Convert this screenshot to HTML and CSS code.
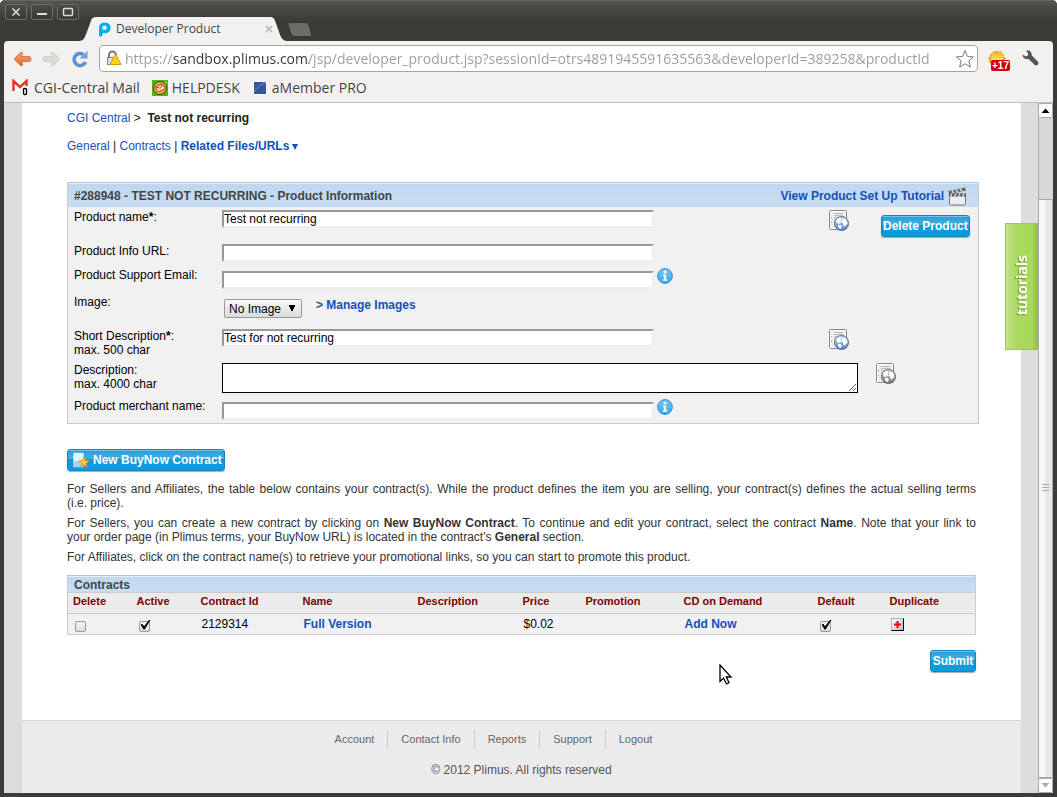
FILE: index.html
```html
<!DOCTYPE html>
<html lang="en">

<head>
    <meta charset="UTF-8">
    <meta name="viewport" content="width=device-width, initial-scale=1.0">
    <title>Developer Product</title>
    <link rel="stylesheet" href="styles.css">
</head>

<body>
    <!-- shared icons -->
    <svg class="sprite" aria-hidden="true">
        <defs>
            <linearGradient id="globe-blue" x1="0" y1="0" x2="0" y2="1">
                <stop offset="0" stop-color="#c3d8ef" />
                <stop offset="1" stop-color="#5583bf" />
            </linearGradient>
            <linearGradient id="globe-gray" x1="0" y1="0" x2="0" y2="1">
                <stop offset="0" stop-color="#d2d2d2" />
                <stop offset="1" stop-color="#777" />
            </linearGradient>
            <linearGradient id="info-fill" x1="0" y1="0" x2="0" y2="1">
                <stop offset="0" stop-color="#7cc4f0" />
                <stop offset="1" stop-color="#29abf0" />
            </linearGradient>
            <linearGradient id="back-fill" x1="0" y1="0" x2="0" y2="1">
                <stop offset="0" stop-color="#f4a878" />
                <stop offset="1" stop-color="#e2662a" />
            </linearGradient>
            <linearGradient id="sun-fill" x1="0" y1="0" x2="0" y2="1">
                <stop offset="0" stop-color="#ffc02e" />
                <stop offset="1" stop-color="#fff08a" />
            </linearGradient>
        </defs>
        <symbol id="icon-page" viewBox="0 0 20 22">
            <rect x="0.5" y="0.5" width="17" height="19" rx="1" fill="#fff" stroke="#888" />
            <rect x="2" y="2" width="14" height="16" fill="#ececec" />
            <path d="M5 3.500h9M5 5.500h9M5 7.500h8M5 9.500h3" stroke="#bbb" />
            <path d="M2 7.500h1M2 12.500h1" stroke="#999" />
        </symbol>
        <symbol id="icon-land" viewBox="0 0 20 22">
            <path d="M6.500 11.500L8 9l3-1.500 1.500 1.500-1 2 1 1.500-2 1-1.500 0.500-1-1.500zM13.500 9l2.500-0.500 2 2.500 0.500 3-1.500 0.500-1 2-1.500-0.500-0.500-2.500-1.500-1zM9 15l2.500 0 1.500 1.500-1.500 2.500-2-1z" fill="#fff" />
        </symbol>
        <symbol id="icon-info" viewBox="0 0 16 16">
            <circle cx="8" cy="8" r="7.400" fill="url(#info-fill)" stroke="#3f8fd0" />
            <circle cx="8" cy="4" r="1.500" fill="#fff" />
            <path d="M6 6.500h3.200v5h1.300v1.200H5.600v-1.200h1.200V7.700H6z" fill="#fff" />
        </symbol>
    </svg>

    <div class="window">
        <header class="titlebar">
            <div class="window-buttons">
                <button type="button" aria-label="Close"><svg width="20" height="14" viewBox="0 0 20 14"><path d="M6.500 3.500l7 7M13.500 3.500l-7 7" stroke="#dfdbd2" stroke-width="1.600" /></svg></button>
                <button type="button" aria-label="Minimize"><svg width="20" height="14" viewBox="0 0 20 14"><path d="M5 9h10" stroke="#dfdbd2" stroke-width="2" /></svg></button>
                <button type="button" aria-label="Maximize"><svg width="20" height="14" viewBox="0 0 20 14"><rect x="5.500" y="3.500" width="9" height="7" rx="1" fill="none" stroke="#dfdbd2" stroke-width="1.500" /></svg></button>
            </div>
            <div class="tab">
                <svg class="tab-shape" viewBox="0 0 212 24" preserveAspectRatio="none" aria-hidden="true">
                    <path d="M0 24C5 24 6 20 8 15L12 4C13 1 14 0 18 0H192C196 0 197 1 198 4L203 18C205 22 206 24 212 24z" fill="#f2f1f0" />
                </svg>
                <svg class="tab-icon" width="14" height="16" viewBox="0 0 14 16" aria-hidden="true">
                    <path d="M7 1a6 6 0 1 1-1 11.500V14a2.200 2.200 0 0 1-4.500 0V7A5.700 5.700 0 0 1 7 1z" fill="#00aeef" stroke="#fff" />
                    <circle cx="7.500" cy="6.800" r="2.200" fill="#fff" />
                </svg>
                <span class="tab-title">Developer Product</span>
                <button class="tab-close" type="button" aria-label="Close tab"><svg width="8" height="8" viewBox="0 0 8 8"><path d="M1 1l6 6M7 1l-6 6" stroke="#b5b4b2" stroke-width="1.500" /></svg></button>
            </div>
            <button class="new-tab" type="button" aria-label="New tab"><svg width="26" height="15" viewBox="0 0 26 15"><path d="M3 0.500H18C20 0.500 21 1 22 3L24.500 12C25 14 24.500 14.500 23 14.500H8C6 14.500 5 14 4 12L1 3C0.500 1.500 1 0.500 3 0.500z" fill="#6d6b67" stroke="#33322e" /></svg></button>
        </header>

        <nav class="toolbar">
            <button type="button" aria-label="Back"><svg width="19" height="16" viewBox="0 0 19 16"><path d="M1 8L7.500 1.500C9 0.500 10 1.500 9.500 3L8.500 5.500H16.500C18.500 5.500 18.500 10.500 16.500 10.500H8.500L9.500 13C10 14.500 9 15.500 7.500 14.500z" fill="url(#back-fill)" stroke="#cf6a36" stroke-width="0.800" /></svg></button>
            <button type="button" aria-label="Forward"><svg width="19" height="16" viewBox="0 0 19 16"><path d="M18 8L11.500 1.500C10 0.500 9 1.500 9.500 3L10.500 5.500H2.500C0.500 5.500 0.500 10.500 2.500 10.500H10.500L9.500 13C9 14.500 10 15.500 11.500 14.500z" fill="#dddbd8" stroke="#cbc9c5" stroke-width="0.800" /></svg></button>
            <button type="button" aria-label="Reload"><svg width="18" height="18" viewBox="0 0 18 18"><path d="M12.500 4.600A6 6 0 1 0 14.500 12" fill="none" stroke="#5b93cf" stroke-width="3.600" /><path d="M16.500 0.500V8.500H8.500z" fill="#6ea5dd" /></svg></button>
            <div class="address">
                <svg width="16" height="17" viewBox="0 0 16 17" aria-hidden="true">
                    <path d="M3 8V5a3.500 3.500 0 0 1 7 0v3" fill="none" stroke="#777" stroke-width="2" />
                    <rect x="1.500" y="7.500" width="10" height="7" fill="#ddd" stroke="#888" />
                    <path d="M9.500 4L15 14.500H4z" fill="#ffd21c" stroke="#d69b00" stroke-linejoin="round" />
                </svg>
                <input class="url" type="text" aria-label="Address" value="https://sandbox.plimus.com/jsp/developer_product.jsp?sessionId=otrs4891945591635563&amp;developerId=389258&amp;productId">
                <svg width="20" height="20" viewBox="0 0 20 20" aria-hidden="true"><path d="M10 1.500l2.400 6 6.100 0.400-4.700 4 1.600 6.200L10 14.700l-5.400 3.400 1.600-6.200-4.700-4 6.100-0.400z" fill="#fff" stroke="#777" /></svg>
            </div>
            <button class="weather" type="button">
                <svg width="18" height="18" viewBox="0 0 18 18" aria-hidden="true"><path d="M9 0l1.500 2L13 1l0.500 2.500 2.500 0.500-0.500 2.500L18 8l-1.500 2 1 2.500-2.500 0.500-1 2.500-2.500-0.500L9 17l-2-2-2.500 1-1-2.500L1 13l0.500-2.500L0 8l2-1.500L2 4l2.500-0.500L5 1l2.500 1z" fill="#f9a11b" /><circle cx="9" cy="8.500" r="6" fill="url(#sun-fill)" /></svg>
                <span>+17</span>
            </button>
            <button type="button" aria-label="Settings"><svg width="17" height="17" viewBox="0 0 17 17"><path d="M4 1C7-0.500 10 1.500 9.800 5.500L16 11.800C17.500 14 15 16.500 12.800 15L6.300 8.800C3 10 0.300 7.500 0.800 4.500L3.500 6.500 6 5.500 6 3z" fill="#555" /></svg></button>
        </nav>

        <nav class="bookmarks">
            <a href="#">
                <svg width="18" height="18" viewBox="0 0 18 18" aria-hidden="true">
                    <rect x="0" y="1" width="16" height="11" fill="#fff" />
                    <path d="M1.500 12V2L8 8l6.500-6v5" fill="none" stroke="#dc3b31" stroke-width="2.500" />
                    <rect x="10" y="8" width="6" height="9" rx="2" fill="#fff" />
                    <rect x="11.500" y="9.500" width="3" height="6" rx="1" fill="none" stroke="#000" stroke-width="1.400" />
                </svg>
                CGI-Central Mail
            </a>
            <a href="#">
                <svg width="16" height="16" viewBox="0 0 16 16" aria-hidden="true">
                    <rect width="16" height="16" fill="#4fb61c" />
                    <circle cx="8" cy="8" r="6.500" fill="#f0a23a" stroke="#2e4b10" />
                    <path d="M3.500 7l6.500-3 3 4.500-7 3.500z" fill="#fff3d8" stroke="#b34a10" />
                    <path d="M3.500 7l5 1.300L10 4" fill="none" stroke="#b34a10" />
                    <path d="M13 1l2 1-1 2z" fill="#b7e86a" />
                </svg>
                HELPDESK
            </a>
            <a href="#">
                <svg width="16" height="16" viewBox="0 0 16 16" aria-hidden="true">
                    <rect x="1" y="1" width="14" height="14" fill="#fff" />
                    <rect x="2" y="2" width="12" height="12" fill="#34569c" />
                    <path d="M2 12Q7 4 14 3" fill="none" stroke="#6d8cc4" />
                </svg>
                aMember PRO
            </a>
        </nav>

        <div class="viewport">
            <div class="page">
                <main class="content">
                    <p class="breadcrumb"><a href="#">CGI Central</a> &gt;&nbsp; <b>Test not recurring</b></p>
                    <p class="subnav"><a href="#">General</a> | <a href="#">Contracts</a> | <a href="#"><b>Related Files/URLs</b><svg width="8" height="6" viewBox="0 0 8 6" aria-hidden="true"><path d="M1 0h6L4 6z" fill="#1351b8" /></svg></a></p>

                    <form class="product-form" action="">
                        <div class="panel-title">
                            <h2>#288948 - TEST NOT RECURRING - Product Information</h2>
                            <a href="#">View Product Set Up Tutorial
                                <svg width="19" height="19" viewBox="0 0 19 19" aria-hidden="true">
                                    <path d="M0.500 4L17 0.500l1 3L1 7.500z" fill="#666" />
                                    <path d="M4 3.500l2 3M8 2.500l2 3M12 1.500l2 3" stroke="#ddd" stroke-width="1.500" />
                                    <rect x="1.500" y="7" width="16" height="11" rx="1" fill="#ececf2" stroke="#77777f" />
                                    <rect x="1" y="6.500" width="17" height="3" fill="#555" />
                                    <path d="M4 6.500l-1.500 3M8 6.500l-1.500 3M12 6.500l-1.500 3M16 6.500l-1.500 3" stroke="#ddd" stroke-width="1.500" />
                                </svg>
                            </a>
                        </div>

                        <div class="row">
                            <label for="name">Product name<b>*</b>:</label>
                            <div class="field"><input type="text" id="name" value="Test not recurring"></div>
                            <svg class="page-icon" width="20" height="22" viewBox="0 0 20 22" aria-hidden="true"><use href="#icon-page" /><circle cx="12.500" cy="13.500" r="7" fill="url(#globe-blue)" stroke="#4a6f9f" /><use href="#icon-land" /></svg>
                            <div class="row-end"><button type="button" class="button">Delete Product</button></div>
                        </div>
                        <div class="row">
                            <label for="info-url">Product Info URL:</label>
                            <div class="field"><input type="text" id="info-url"></div>
                        </div>
                        <div class="row">
                            <label for="email">Product Support Email:</label>
                            <div class="field with-help"><input type="text" id="email"><svg width="16" height="16" aria-hidden="true"><use href="#icon-info" /></svg></div>
                        </div>
                        <div class="row">
                            <label for="image">Image:</label>
                            <div class="field image-field">
                                <select id="image"><option>No Image</option></select>
                                <a href="#"><b>&gt; Manage Images</b></a>
                            </div>
                        </div>
                        <div class="row">
                            <label for="short">Short Description<b>*</b>:<br>max. 500 char</label>
                            <div class="field"><input type="text" id="short" value="Test for not recurring"></div>
                            <svg class="page-icon" width="20" height="22" viewBox="0 0 20 22" aria-hidden="true"><use href="#icon-page" /><circle cx="12.500" cy="13.500" r="7" fill="url(#globe-blue)" stroke="#4a6f9f" /><use href="#icon-land" /></svg>
                            <div class="row-end"></div>
                        </div>
                        <div class="row row-long">
                            <label for="long">Description:<br>max. 4000 char</label>
                            <textarea id="long"></textarea>
                            <svg class="page-icon" width="20" height="22" viewBox="0 0 20 22" aria-hidden="true"><use href="#icon-page" /><circle cx="12.500" cy="13.500" r="7" fill="url(#globe-gray)" stroke="#666" /><use href="#icon-land" /></svg>
                        </div>
                        <div class="row">
                            <label for="merchant">Product merchant name:</label>
                            <div class="field with-help"><input type="text" id="merchant"><svg width="16" height="16" aria-hidden="true"><use href="#icon-info" /></svg></div>
                        </div>
                    </form>

                    <section class="contracts">
                        <button type="button" class="button">
                            <svg width="18" height="16" viewBox="0 0 18 16" aria-hidden="true">
                                <rect x="1.500" y="1" width="10" height="14" fill="#e8f3fb" stroke="#cfe6f6" stroke-dasharray="1 1" />
                                <path d="M1 9h10v6H1z" fill="#a5d3ef" />
                                <path d="M12 5l1.500 3.300 3.500 0.400-2.600 2.500 0.700 3.800-3.100-1.900L8.900 15l0.700-3.800L7 8.700l3.500-0.400z" fill="#ffc63a" stroke="#e08a1a" stroke-width="0.800" />
                            </svg>
                            New BuyNow Contract
                        </button>
                        <p>For Sellers and Affiliates, the table below contains your contract(s). While the product defines the item you are selling, your contract(s) defines the actual selling terms (i.e.&nbsp;price).</p>
                        <p>For Sellers, you can create a new contract by clicking on <b>New BuyNow Contract</b>. To continue and edit your contract, select the contract <b>Name</b>. Note that your link to your&nbsp;order page (in Plimus terms, your BuyNow URL) is located in the contract's <b>General</b> section.</p>
                        <p>For Affiliates, click on the contract name(s) to retrieve your promotional links, so you can start to promote this product.</p>

                        <table>
                            <caption>Contracts</caption>
                            <colgroup>
                                <col class="col-check"><col class="col-check"><col class="col-id"><col class="col-name"><col class="col-desc">
                                <col class="col-price"><col class="col-promo"><col class="col-cd"><col class="col-default"><col>
                            </colgroup>
                            <thead>
                                <tr>
                                    <th>Delete</th>
                                    <th>Active</th>
                                    <th>Contract Id</th>
                                    <th>Name</th>
                                    <th>Description</th>
                                    <th>Price</th>
                                    <th>Promotion</th>
                                    <th>CD on Demand</th>
                                    <th>Default</th>
                                    <th>Duplicate</th>
                                </tr>
                            </thead>
                            <tbody>
                                <tr>
                                    <td><input type="checkbox" aria-label="Delete"></td>
                                    <td><input type="checkbox" aria-label="Active" checked></td>
                                    <td>2129314</td>
                                    <td><a href="#"><b>Full Version</b></a></td>
                                    <td></td>
                                    <td>$0.02</td>
                                    <td></td>
                                    <td><a href="#"><b>Add Now</b></a></td>
                                    <td><input type="checkbox" aria-label="Default" checked></td>
                                    <td><button class="duplicate" type="button" aria-label="Duplicate"><svg width="7" height="7" viewBox="0 0 7 7"><path d="M3.500 0v7M0 3.500h7" stroke="#f00000" stroke-width="2" /></svg></button></td>
                                </tr>
                            </tbody>
                        </table>
                        <div class="actions"><button type="submit" class="button">Submit</button></div>
                    </section>
                </main>

                <footer class="footer">
                    <ul>
                        <li><a href="#">Account</a></li>
                        <li><a href="#">Contact Info</a></li>
                        <li><a href="#">Reports</a></li>
                        <li><a href="#">Support</a></li>
                        <li><a href="#">Logout</a></li>
                    </ul>
                    <p>© 2012 Plimus. All rights reserved</p>
                </footer>
            </div>

            <button class="tutorials" type="button"><span>tutorials</span></button>

            <div class="scrollbar" aria-hidden="true">
                <div class="scroll-arrow"><svg width="9" height="5" viewBox="0 0 9 5"><path d="M0.500 5L4.500 0.500 8.500 5z" fill="#000" /></svg></div>
                <div class="scroll-track"></div>
                <div class="scroll-thumb"><svg width="7" height="9" viewBox="0 0 7 9"><path d="M0 0.500h7M0 3.500h7M0 6.500h7" stroke="#aaa" /></svg></div>
                <div class="scroll-arrow"><svg width="9" height="5" viewBox="0 0 9 5"><path d="M0.500 0h8L4.500 4.500z" fill="#aaa" /></svg></div>
            </div>
        </div>
    </div>

    <svg class="cursor" width="14" height="22" viewBox="0 0 14 22" aria-hidden="true">
        <path d="M1 1V17.500L4.500 14l3 6 2.500-1.200L7.300 13H12z" fill="#fff" stroke="#000" stroke-width="1.300" />
    </svg>
</body>

</html>
```

FILE: styles.css
```css
* {
    box-sizing: border-box;
}

body {
    margin: 0;
    font-family: "Liberation Sans", Arial, sans-serif;
    font-size: 12px;
    line-height: 14px;
    color: #000;
}

h2,
p,
ul {
    margin: 0;
    padding: 0;
}

a {
    color: #1351b8;
    text-decoration: none;
}

button {
    padding: 0;
    border: none;
    background: none;
    font: inherit;
    color: inherit;
}

svg {
    display: block;
    flex: none;
}

.sprite {
    position: absolute;
    width: 0;
    height: 0;
}

/* window frame */
.window {
    display: flex;
    flex-direction: column;
    height: 100vh;
    padding: 0 4px 4px;
    background-color: #3c3b37;
    border-radius: 5px 5px 0 0;
    overflow: hidden;
}

.titlebar {
    display: flex;
    align-items: flex-end;
    height: 41px;
    flex: none;
    margin: 0 -4px;
    padding-left: 5px;
    background: linear-gradient(#55534d, #3c3b37 18px);
    border-top: 1px solid #66645f;
}

.window-buttons {
    display: flex;
    gap: 4px;
    align-self: flex-start;
    padding-top: 3px;
}

.window-buttons button {
    border: 1px solid #6f6d66;
    border-radius: 2px;
    background: linear-gradient(#4c4a45, #3a3935);
}

.tab {
    position: relative;
    display: flex;
    align-items: center;
    width: 210px;
    height: 24px;
    padding: 0 16px 0 18px;
}

.tab-shape {
    position: absolute;
    top: 0;
    left: 0;
    width: 100%;
    height: 100%;
}

.tab-icon,
.tab-title,
.tab-close {
    position: relative;
}

.tab-title {
    flex: 1;
    padding-left: 5px;
    font-family: "Open Sans", "Noto Sans", sans-serif;
    color: #444;
}

.new-tab {
    margin-bottom: 4px;
    margin-left: -2px;
}

/* toolbar */
.toolbar {
    display: flex;
    align-items: center;
    gap: 10px;
    padding: 1px 14px 0 9px;
    height: 34px;
    flex: none;
    background-color: #f2f1f0;
    border-radius: 4px 4px 0 0;
}

.address {
    display: flex;
    align-items: center;
    flex: 1;
    min-width: 0;
    height: 27px;
    padding: 0 2px 0 6px;
    background-color: #fff;
    border: 1px solid #a5a4a2;
    border-radius: 4px;
}

.url {
    flex: 1;
    min-width: 0;
    height: 24px;
    margin-left: 3px;
    padding: 0;
    border: none;
    outline: none;
    font-family: "Open Sans", "Noto Sans", sans-serif;
    font-size: 14px;
    /* host is darker than the rest of the address */
    background: linear-gradient(90deg, #9b9b9b 48px, #333 48px, #333 184px, #9b9b9b 184px);
    -webkit-background-clip: text;
    background-clip: text;
    color: transparent;
}

.weather {
    position: relative;
    width: 22px;
    height: 24px;
    margin-right: 2px;
}

.weather span {
    position: absolute;
    right: 0;
    bottom: 0;
    padding: 0 1px;
    border-radius: 2px;
    background-color: #d0000c;
    font-size: 10px;
    line-height: 11px;
    font-weight: bold;
    color: #fff;
}

.bookmarks {
    display: flex;
    gap: 12px;
    height: 28px;
    flex: none;
    padding: 0 8px 2px;
    background-color: #f2f1f0;
    border-bottom: 1px solid #bfbebc;
}

.bookmarks a {
    display: flex;
    align-items: center;
    gap: 4px;
    font-family: "Open Sans", "Noto Sans", sans-serif;
    font-size: 14px;
    color: #444;
}

/* page */
.viewport {
    position: relative;
    display: flex;
    flex: 1;
    min-height: 0;
    background-color: #dcdcdc;
}

.page {
    display: flex;
    flex-direction: column;
    flex: 1;
    min-width: 0;
    margin: 0 17px 0 18px;
    background-color: #fff;
}

.content {
    padding: 8px 42px 48px 45px;
}

.breadcrumb,
.subnav {
    margin-bottom: 14px;
    color: #222;
}

.subnav {
    margin-bottom: 29px;
}

.subnav svg {
    display: inline-block;
    margin-left: 2px;
}

/* product form */
.product-form {
    background-color: #f1f1f1;
    border: 1px solid #ccc;
    border-top: 1px solid #afc4da;
}

.panel-title {
    display: flex;
    justify-content: space-between;
    align-items: center;
    height: 24px;
    padding: 2px 11px 0 6px;
    background: linear-gradient(#e2eefa 1px, #bfd8ef 1px, #c8ddf4);
}

.panel-title h2 {
    font-size: 12px;
    color: #444;
}

.panel-title a {
    display: flex;
    align-items: center;
    gap: 4px;
    font-weight: bold;
}

.row {
    display: flex;
    align-items: flex-start;
    padding: 3px 7px 3px 6px;
}

.row label {
    width: 148px;
    flex: none;
}

.field {
    flex: 1;
}

.field input {
    display: block;
    width: 432px;
    height: 18px;
    padding: 0;
    border: 2px solid;
    border-color: #999 #eee #eee #999;
    background-color: #fff;
    font: inherit;
}

.with-help {
    display: flex;
    align-items: flex-end;
    gap: 3px;
    height: 21px;
}

.with-help svg {
    align-self: flex-start;
}

.row-end {
    width: 90px;
    height: 28px;
    margin-left: 32px;
    padding-top: 5px;
}

.image-field {
    display: flex;
    gap: 14px;
    height: 28px;
    padding: 3px 2px;
}

.image-field select {
    width: 78px;
    height: 19px;
    margin-top: 1px;
    padding: 0 4px;
    border: 1px solid #999;
    border-radius: 2px;
    appearance: none;
    background: conic-gradient(from -26deg at 50% 100%, #000 52deg, transparent 0) right 5px center / 8px 7px no-repeat, linear-gradient(#f7f7f7, #dcdcdc);
    font: inherit;
}

.row-long {
    padding-right: 82px;
}

.row-long textarea {
    flex: 1;
    height: 30px;
    margin-right: 18px;
    border: 1px solid #000;
    background-color: #fff;
}

.button {
    display: flex;
    align-items: center;
    justify-content: center;
    gap: 3px;
    min-width: 46px;
    height: 22px;
    padding: 0 1px;
    border: 1px solid #1184bd;
    border-radius: 3px;
    background: linear-gradient(#6cc3ec 1px, #2a9fd8 1px, #45b0e2 9px, #109ade 9px, #109ade);
    box-shadow: 0 1px 1px #aaa;
    font-weight: bold;
    color: #fff;
    white-space: nowrap;
}

/* contracts */
.contracts {
    padding: 25px 3px 0 0;
    color: #333;
}

.contracts p {
    margin-bottom: 6px;
    text-align: justify;
}

.contracts > .button {
    margin-bottom: 11px;
    padding: 0 2px 0 4px;
}

table {
    width: 100%;
    margin-top: 11px;
    table-layout: fixed;
    border-collapse: collapse;
    border: 1px solid #ccc;
    background-color: #f1f1f1;
    color: #000;
}

caption {
    height: 17px;
    padding: 2px 6px 0;
    border: 1px solid #ccc;
    border-top-color: #afc4da;
    border-bottom: none;
    background: linear-gradient(#e2eefa 1px, #bfd8ef 1px, #c8ddf4);
    text-align: left;
    font-weight: bold;
    color: #444;
}

th {
    height: 21px;
    padding: 0 5px 5px;
    border-bottom: 1px solid #ccc;
    background-color: #ebebeb;
    text-align: left;
    font-size: 11px;
    color: #800000;
    white-space: nowrap;
}

td {
    height: 21px;
    padding: 0 6px;
}

.col-check {
    width: 64px;
}

.col-id {
    width: 102px;
}

.col-name {
    width: 115px;
}

.col-desc {
    width: 105px;
}

.col-price {
    width: 63px;
}

.col-promo {
    width: 98px;
}

.col-cd {
    width: 134px;
}

.col-default {
    width: 72px;
}

td input {
    position: relative;
    display: block;
    width: 11px;
    height: 11px;
    margin: 4px 1px 0;
    border: 1px solid #999;
    border-radius: 2px;
    appearance: none;
    background: linear-gradient(#f6f6f6, #dcdcdc);
}

td input:checked::after {
    content: "";
    position: absolute;
    left: 1px;
    top: -2px;
    width: 10px;
    height: 10px;
    background-color: #000;
    clip-path: polygon(0 50%, 18% 42%, 36% 68%, 88% 0, 100% 4%, 42% 100%, 30% 100%);
}

.duplicate {
    display: flex;
    align-items: center;
    justify-content: center;
    width: 13px;
    height: 13px;
    border: 1px solid;
    border-color: #9db4d0 #000 #000 #9db4d0;
    background: linear-gradient(135deg, #fff, #bbb);
}

.actions {
    display: flex;
    justify-content: flex-end;
    padding-top: 15px;
}

/* footer */
.footer {
    flex: 1;
    padding-top: 9px;
    border-top: 1px solid #d8d8d8;
    background-color: #ebebeb;
    text-align: center;
    color: #555;
}

.footer ul {
    display: flex;
    justify-content: center;
    margin-bottom: 14px;
    padding-right: 56px;
    list-style: none;
    font-size: 11px;
    line-height: 19px;
}

.footer li {
    padding: 0 13px;
}

.footer li + li {
    border-left: 1px solid #ccc;
}

.footer a {
    color: #666;
}

/* side tab and scrollbar */
.tutorials {
    position: absolute;
    top: 120px;
    right: 15px;
    width: 33px;
    height: 127px;
    border: 1px solid #9cc26a;
    border-right: none;
    background: linear-gradient(90deg, #c3e48c, #a8d85c 12px, #a8d85c 26px, #8fbb47);
}

.tutorials span {
    writing-mode: vertical-rl;
    transform: rotate(180deg);
    font-family: "Open Sans", "Noto Sans", sans-serif;
    font-size: 14px;
    font-weight: bold;
    color: #fff;
    text-shadow: -1px -1px 1px #6f9a30;
}

.scrollbar {
    display: flex;
    flex-direction: column;
    width: 15px;
    border-left: 1px solid #aaa;
    background-color: #dad8d6;
}

.scroll-arrow,
.scroll-thumb {
    display: flex;
    align-items: center;
    justify-content: center;
    height: 15px;
    border: 1px solid #aaa;
    border-left: none;
    border-radius: 2px;
    background-color: #fff;
}

.scroll-track {
    height: 81px;
}

.scroll-thumb {
    flex: 1;
    border-radius: 0;
    background: linear-gradient(90deg, #f8f7f6 50%, #e9e8e7 50%);
}

.cursor {
    position: absolute;
    left: 719px;
    top: 664px;
}
```
